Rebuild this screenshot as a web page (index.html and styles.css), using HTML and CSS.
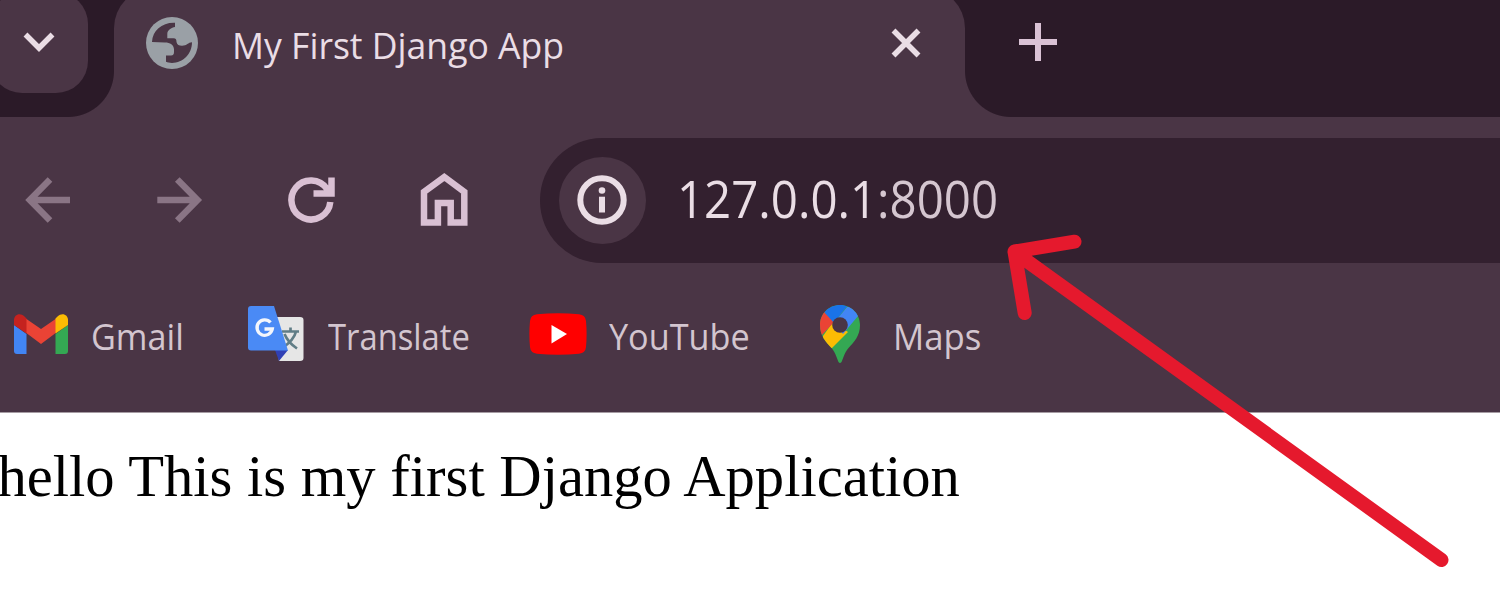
FILE: index.html
```html
<!DOCTYPE html>
<html lang="en">
<head>
<meta charset="utf-8">
<title>My First Django App</title>
<link rel="stylesheet" href="styles.css">
</head>
<body>
<div class="browser">
  <header class="tab-strip">
    <button class="tab-search" aria-label="Search tabs">
      <svg width="36" height="24" viewBox="0 0 36 24"><path d="M4.500 4.500 18 18 31.500 4.500" fill="none" stroke="currentColor" stroke-width="5.500"/></svg>
    </button>
    <div class="tab">
      <svg class="globe" width="54" height="54" viewBox="0 0 54 54">
        <circle cx="27" cy="27" r="26" fill="#9aa0a6"/>
        <path d="M7 26C7.500 14.500 17 6.300 30 6.800V11C26.500 11.500 22.300 14 22.300 18V22.300H28.500C31 22.300 31.500 24 31.500 26C32 28.800 34 29.700 37 29.700C42 29.700 43 26.500 47 26.300C47 38 38 47 27 47C24.500 47 22.500 46.500 21 45.800V39.500H26C28.300 39.500 29 38 29 36V33.500C29 29 25 26.500 20 26.500Z" fill="#4a3545"/>
      </svg>
      <span class="tab-title">My First Django App</span>
      <svg class="close" width="32" height="32" viewBox="0 0 32 32"><path d="M3.500 3.500 28.500 28.500M28.500 3.500 3.500 28.500" stroke="currentColor" stroke-width="5.500"/></svg>
    </div>
    <svg class="new-tab" width="40" height="40" viewBox="0 0 40 40"><path d="M1 20H39M20 1V39" stroke="currentColor" stroke-width="6"/></svg>
  </header>

  <nav class="toolbar">
    <svg class="tool disabled" viewBox="0 0 60 60"><path d="M52 30H14M32 9.500 11.800 30 32 50.500" /></svg>
    <svg class="tool disabled" viewBox="0 0 60 60"><path d="M7.300 30H45.300M27.300 9.500 47.500 30 27.300 50.500"/></svg>
    <svg class="tool" viewBox="0 0 60 60"><path d="M49.300 32A19.500 19.500 0 1 1 46 19L50 24M50.500 7.500V23.500H32.500" transform="translate(-1 0)"/></svg>
    <svg class="tool" viewBox="0 0 60 60"><path d="M10 52.500V21.800L30.300 7 50.300 21.800V52.500H36.700V33H23.900V52.500Z"/></svg>
    <div class="omnibox">
      <span class="site-info">
        <svg width="52" height="52" viewBox="0 0 52 52"><circle cx="26" cy="26" r="21.700" fill="none" stroke="currentColor" stroke-width="6"/><circle cx="26" cy="16.500" r="3.300" fill="currentColor"/><path d="M26 22.700V38.500" stroke="currentColor" stroke-width="6"/></svg>
      </span>
      <span class="url">127.0.0.1<span class="port">:8000</span></span>
    </div>
  </nav>

  <div class="bookmarks">
    <a class="bookmark gmail">
      <svg width="54" height="41" viewBox="0 0 54 41">
        <path d="M0 11 12.500 20V40H3Q0 40 0 37Z" fill="#4285f4"/>
        <path d="M54 11 41.500 20V40H51Q54 40 54 37Z" fill="#34a853"/>
        <path d="M11 4 27 15 43 4V18L27 30 11 18Z" fill="#ea4335"/>
        <path d="M0 11V6C0 .5 6-2 10.500 2.500L12.500 4.500V19.500L0 11Z" fill="#c5221f"/>
        <path d="M54 11V6C54 .5 48-2 43.500 2.500L41.500 4.500V19.500Z" fill="#fbbc04"/>
      </svg>
      <span class="label">Gmail</span>
    </a>
    <a class="bookmark translate">
      <svg width="56" height="56" viewBox="0 0 56 56">
        <path d="M25 11H52Q55.500 11 55.500 14V52Q55.500 55 52 55H31Z" fill="#e6e6e6"/>
        <path d="M34 25.500H51M42.500 21.500V25.500M48 25.500C46.500 32 42 37 34 42M36.500 28C39 34 43 38.500 49 42.500" fill="none" stroke="#607d86" stroke-width="2.700"/>
        <path d="M27 44H40L31 55Z" fill="#3040b5"/>
        <path d="M3 0H26L40 44.500H3Q0 44.500 0 41.500V3Q0 0 3 0Z" fill="#4a8af5"/>
        <path d="M22.500 16.500A7.700 7.700 0 1 0 24.300 23H16.500" fill="none" stroke="#f3f6fc" stroke-width="3.300"/>
      </svg>
      <span class="label">Translate</span>
    </a>
    <a class="bookmark youtube">
      <svg width="58" height="42" viewBox="0 0 58 42">
        <path d="M8 1.200Q29-.8 50 1.200 56.500 2 57 8 58.200 21 57 34 56.500 40 50 40.800 29 42.800 8 40.800 1.500 40 1 34-.2 21 1 8 1.500 2 8 1.200Z" fill="#f00"/>
        <path d="M22.500 12V30.500L38 21Z" fill="#fff"/>
      </svg>
      <span class="label">YouTube</span>
    </a>
    <a class="bookmark maps">
      <svg width="40" height="58" viewBox="0 0 40 58">
        <defs><clipPath id="pin"><path d="M20 0C8.500 0 0 9 0 20 0 31 6 37 11.500 43 16 48.500 17 54 18.500 57Q20 59 21.500 57C23 54 24 48.500 28.500 43 34 37 40 31 40 20 40 9 31.500 0 20 0Z"/></clipPath></defs>
        <g clip-path="url(#pin)">
          <path d="M0 0H40V58H0Z" fill="#34a853"/>
          <path d="M3 31 13 17 28 27 12 43 0 43Z" fill="#fbbc04"/>
          <path d="M0 0 5 8 15 16 2 30H-2Z" fill="#ea4335"/>
          <path d="M0 0H28L14 18 5 8Z" fill="#1a73e8"/>
          <path d="M27 2 40 0 38 11 23 29 14 18Z" fill="#4285f4"/>
        </g>
        <circle cx="20" cy="20" r="7.800" fill="#4a3545"/>
      </svg>
      <span class="label">Maps</span>
    </a>
  </div>

  <main class="page">hello This is my first Django Application</main>

  <svg class="pointer" width="1500" height="595" viewBox="0 0 1500 595"><path d="M1441.500 560 1014.500 252M1074.500 241.700 1014.500 251.500 1024.700 313" fill="none" stroke="#e5192d" stroke-width="14" stroke-linecap="round" stroke-linejoin="round"/></svg>
</div>
</body>
</html>
```
FILE: styles.css
```css
* { box-sizing: border-box; }

body { margin: 0; }

.browser {
  position: relative;
  width: 1500px;
  height: 595px;
  overflow: hidden;
  background: #4a3545;
  font-family: "Open Sans", "Noto Sans", sans-serif;
  color: #eadde5;
}

.browser svg { display: block; flex: none; }

.tab-strip {
  display: flex;
  height: 116.500px;
  background: #2b1a28;
}

.tab-search {
  display: flex;
  justify-content: center;
  width: 98px;
  height: 101px;
  margin: -8px 0 0 -10px;
  padding: 38px 0 0 0;
  border: 0;
  border-radius: 32px;
  background: #4a3545;
  color: #eadde5;
}

.tab {
  position: relative;
  display: flex;
  align-items: center;
  width: 851px;
  height: 130px;
  margin: -12px 0 0 26px;
  padding: 0 43px 20px 31px;
  border-radius: 40px 40px 0 0;
  background: #4a3545;
}

/* concave feet joining the tab to the toolbar */
.tab::before,
.tab::after {
  content: "";
  position: absolute;
  bottom: 1.500px;
  width: 46px;
  height: 46px;
}

.tab::before {
  right: 100%;
  background: radial-gradient(circle at 0 0, transparent 45.500px, #4a3545 46.500px);
}

.tab::after {
  left: 100%;
  background: radial-gradient(circle at 100% 0, transparent 45.500px, #4a3545 46.500px);
}

.tab-title {
  flex: 1;
  margin: 6px 0 0 32.500px;
  font-size: 36px;
  line-height: 50px;
  white-space: nowrap;
  transform: scaleX(.988);
  transform-origin: left;
}

.close { margin-top: -1px; }

.new-tab {
  margin: 22px 0 0 53px;
  color: #dac2d5;
}

.toolbar {
  display: flex;
  align-items: center;
  gap: 72px;
  height: 146px;
  padding: 21.500px 0 0 17.500px;
}

.tool {
  width: 60px;
  height: 60px;
  fill: none;
  stroke: #d9c0d3;
  stroke-width: 6.500px;
}

.disabled { stroke: #8a7585; }

.omnibox {
  display: flex;
  flex: 1;
  align-items: center;
  height: 124.500px;
  margin-left: -5.500px;
  padding-left: 18.500px;
  border-radius: 62px 0 0 62px;
  background: #33202f;
}

.site-info {
  display: grid;
  place-items: center;
  width: 87px;
  height: 87px;
  border-radius: 50%;
  background: #4a3545;
}

.url {
  margin: -4px 0 0 31px;
  font-size: 52px;
  line-height: 70px;
  white-space: nowrap;
  transform: scaleX(.912);
  transform-origin: left;
}

.port { color: #d5c6d0; }

.bookmarks {
  display: flex;
  align-items: center;
  height: 150px;
  padding: 0 0 6px 13.500px;
  border-bottom: 1px solid #a69ca3;
  color: #d3c5cf;
}

.bookmark {
  display: flex;
  align-items: center;
}

.gmail { width: 234px; }
.translate { width: 281px; }
.youtube { width: 291.500px; }

.label {
  margin: 5px 0 0 23.500px;
  font-size: 36px;
  line-height: 50px;
  white-space: nowrap;
  transform: scaleX(.95);
  transform-origin: left;
}

.translate .label { margin-left: 24px; transform: scaleX(.91); }
.youtube .label { margin-left: 22px; }
.maps .label { margin-left: 32.500px; transform: scaleX(.965); }

.page {
  height: 182.500px;
  padding: 31px 0 0 0;
  background: #fff;
  color: #000;
  font: 58.600px/66px "Liberation Serif", serif;
  text-indent: -2.500px;
  white-space: nowrap;
}

.pointer {
  position: absolute;
  top: 0;
  left: 0;
}
```
